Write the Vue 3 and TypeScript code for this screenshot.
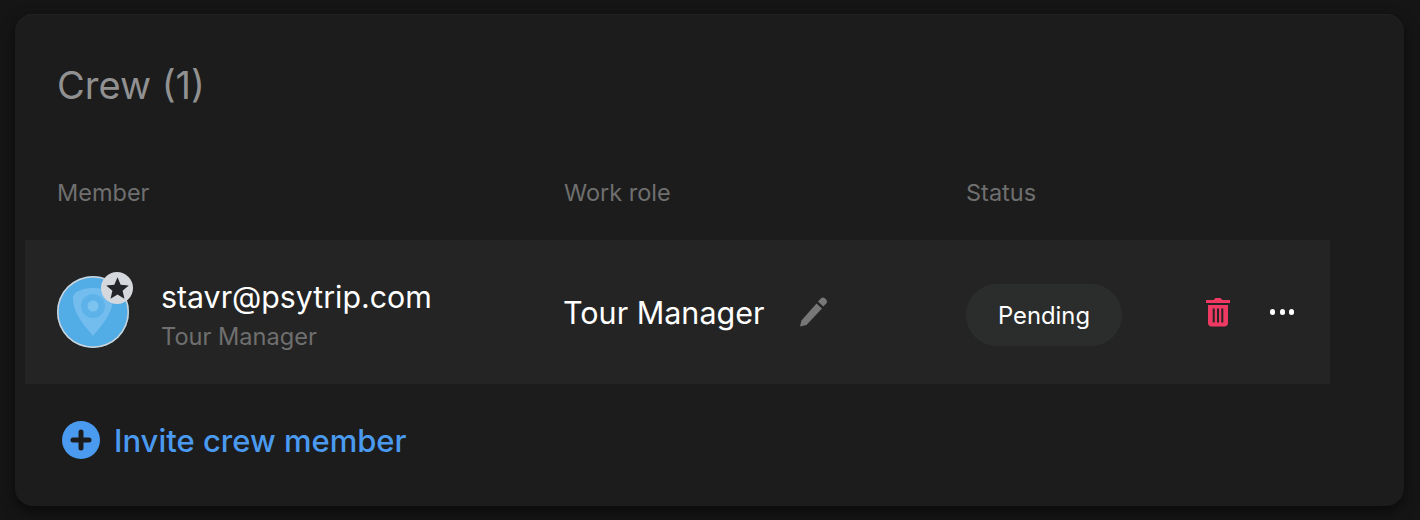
<script setup lang="ts">
const columns: string[] = ['Member', 'Work role', 'Status']
</script>

<template>
  <div class="page">
    <section class="card">
      <h2 class="title">Crew (1)</h2>
      <div class="head grid">
        <span v-for="c in columns" :key="c">{{ c }}</span>
      </div>
      <div class="row grid">
        <div class="member">
          <div class="avatar">
            <svg class="pin" viewBox="0 0 72 72" width="72" height="72">
              <path d="M16 22 C16 15 28 12 36 12 C44 12 56 15 56 22 C56 38 44 50 36 60 C28 50 16 38 16 22 Z" fill="#73bdee" />
              <circle cx="36" cy="30" r="12" fill="#5db3e9" />
              <circle cx="36" cy="30" r="5.5" fill="#7cc3f0" />
            </svg>
            <span class="badge">
              <svg viewBox="0 0 24 24" width="27" height="27">
                <path d="M12 17.270L18.180 21l-1.640-7.030L22 9.240l-7.190-.61L12 2 9.190 8.630 2 9.240l5.460 4.730L5.820 21z" fill="#222427" />
              </svg>
            </span>
          </div>
          <div class="who">
            <div class="email">stavr@psytrip.com</div>
            <div class="sub">Tour Manager</div>
          </div>
        </div>
        <div class="role">
          <span>Tour Manager</span>
          <svg class="pencil" viewBox="0 0 32 32" width="32" height="32">
            <path d="M1 30.500l1.500-6 15-17 5.500 5-15.500 16.500z" fill="#777" />
            <path d="M19 5.500l3-3.300c1-1 2.500-1 3.800 0l1.500 1.500c1 1.200 1 2.600 0 3.700l-3 3.200z" fill="#777" />
          </svg>
        </div>
        <div class="status">
          <span class="pill">Pending</span>
        </div>
        <div class="actions">
          <svg class="trash" viewBox="0 0 24 30" width="24" height="30">
            <path d="M8 3c0-1 1-2 2-2h4c1 0 2 1 2 2h8v3H0V3z" fill="#ee3a63" />
            <path fill-rule="evenodd" d="M2 8h20v18c0 2-1.500 3.500-3.500 3.500h-13C3.500 29.500 2 28 2 26zM6.700 11.500v14h2v-14zM11 11.500v14h2v-14zM15.300 11.500v14h2v-14z" fill="#ee3a63" />
          </svg>
          <span class="dots"><i></i><i></i><i></i></span>
        </div>
      </div>
      <div class="invite">
        <svg viewBox="0 0 38 38" width="38" height="38">
          <circle cx="19" cy="19" r="19" fill="#4a9af0" />
          <path d="M19 11v16M11 19h16" stroke="#1c1c1c" stroke-width="5" stroke-linecap="round" />
        </svg>
        <span>Invite crew member</span>
      </div>
    </section>
  </div>
</template>

<style>
html, body { margin: 0; background: #151515; }
</style>

<style scoped>
.page {
  width: 1420px;
  height: 520px;
  padding: 14px 16px 14px 15px;
  box-sizing: border-box;
  background: #151515;
  font-family: Inter, "Liberation Sans", sans-serif;
  overflow: hidden;
}
.card {
  height: 492px;
  box-sizing: border-box;
  background: #1c1c1c;
  border-radius: 18px;
  box-shadow: 0 5px 14px rgba(0, 0, 0, 0.55), inset 0 1px 0 #222;
  padding: 49px 74px 0 10px;
}
.title {
  margin: 0 0 0 32px;
  font-size: 38px;
  line-height: 44px;
  font-weight: 400;
  color: #919191;
}
.grid {
  display: grid;
  grid-template-columns: 507px 402px 1fr;
  padding-left: 32px;
}
.head {
  margin-top: 71px;
  height: 62px;
  font-size: 23.5px;
  line-height: 30px;
  color: #6f6f6f;
}
.row {
  position: relative;
  height: 144px;
  background: #242424;
  align-items: center;
}
.member { display: flex; align-items: center; gap: 32px; }
.avatar {
  position: relative;
  width: 72px;
  height: 72px;
  border-radius: 50%;
  background: #52ace6;
  box-shadow: inset 0 0 0 1.500px #cfd3d6;
}
.pin { display: block; }
.badge {
  position: absolute;
  top: -4px;
  right: -4px;
  width: 32px;
  height: 32px;
  border-radius: 50%;
  background: #d5d8dc;
  display: flex;
  align-items: center;
  justify-content: center;
}
.who { margin-top: 7px; }
.email { font-size: 30.3px; line-height: 36px; color: #fff; }
.sub { font-size: 23.6px; line-height: 30px; margin-top: 7px; color: #6f6f6f; }
.role {
  display: flex;
  align-items: center;
  gap: 35px;
  font-size: 30.5px;
  color: #fff;
  margin-left: -1px;
}
.pencil { display: block; }
.status { display: flex; margin-top: 6px; }
.pill {
  width: 156px;
  height: 62px;
  border-radius: 31px;
  background: #2b2d2d;
  color: #fff;
  font-size: 23.8px;
  display: flex;
  align-items: center;
  justify-content: center;
}
.actions {
  position: absolute;
  left: 1181px;
  top: 57px;
  display: flex;
  align-items: center;
  gap: 40px;
}
.trash { display: block; }
.dots { display: flex; gap: 4.300px; }
.dots i {
  display: block;
  width: 5.300px;
  height: 5.300px;
  border-radius: 50%;
  background: #fff;
}
.invite {
  margin: 37px 0 0 37px;
  display: flex;
  align-items: center;
  gap: 14px;
  color: #4a9af0;
  font-size: 31px;
  font-weight: 500;
}
.invite svg { display: block; }
</style>
